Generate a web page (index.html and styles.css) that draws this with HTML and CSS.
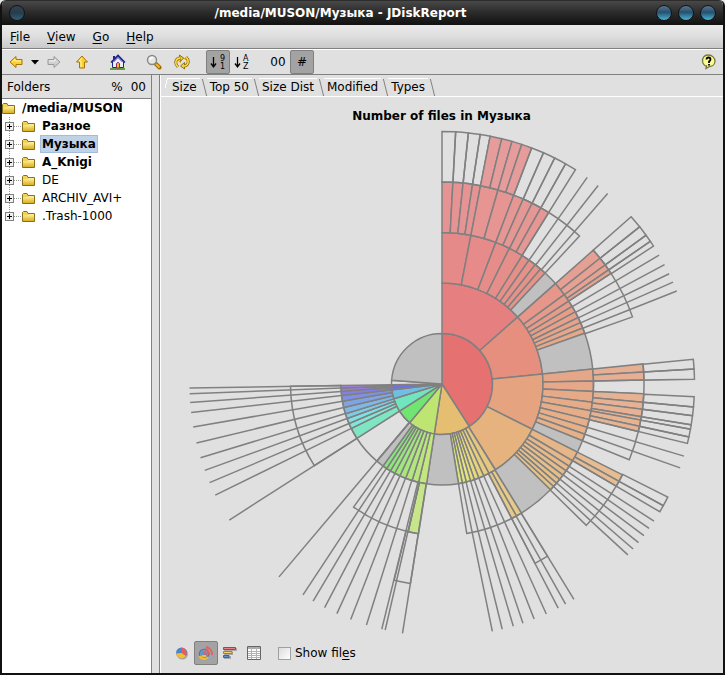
FILE: index.html
```html
<!DOCTYPE html>
<html lang="ru">
<head>
    <meta charset="utf-8">
    <title>/media/MUSON/Музыка - JDiskReport</title>
    <meta name="viewport" content="width=device-width, initial-scale=1">
    <link rel="stylesheet" href="styles.css">
</head>
<body>
    <div class="window">
        <header class="titlebar">
            <button class="orb dim" aria-label="Window menu"></button>
            <h1>/media/MUSON/Музыка - JDiskReport</h1>
            <div class="orbs">
                <button class="orb" aria-label="Minimize"></button>
                <button class="orb" aria-label="Maximize"></button>
                <button class="orb" aria-label="Close"></button>
            </div>
        </header>

        <nav class="menubar">
            <button><u>F</u>ile</button>
            <button><u>V</u>iew</button>
            <button><u>G</u>o</button>
            <button><u>H</u>elp</button>
        </nav>

        <div class="toolbar">
            <div class="group">
                <button class="tool" aria-label="Back">
                    <svg width="14" height="14" viewBox="0 0 14 14"><path d="M1 7 7 1.500V4.500H13V9.500H7V12.500Z" fill="#f7d038" stroke="#a87500"/><path d="M3 7 6 4V6H12" fill="none" stroke="#fff7b0"/></svg>
                </button>
                <button class="tool narrow" aria-label="History">
                    <svg width="8" height="5" viewBox="0 0 8 5"><path d="M0 0H8L4 4.500Z" fill="#000"/></svg>
                </button>
                <button class="tool" aria-label="Forward">
                    <svg width="14" height="14" viewBox="0 0 14 14"><path d="M13 7 7 1.500V4.500H1V9.500H7V12.500Z" fill="#d0d0d0" stroke="#999"/><path d="M2 6H8V4" fill="none" stroke="#f4f4f4"/></svg>
                </button>
            </div>
            <div class="group wide">
                <button class="tool" aria-label="Up">
                    <svg width="14" height="14" viewBox="0 0 14 14"><path d="M7 1 12.500 7H9.500V13H4.500V7H1.500Z" fill="#f7d038" stroke="#a87500"/><path d="M7 3 4 6H6V12" fill="none" stroke="#fff7b0"/></svg>
                </button>
            </div>
            <div class="group wide">
                <button class="tool" aria-label="Home">
                    <svg width="16" height="16" viewBox="0 0 16 16"><path d="M0 15H15" stroke="#62a03a" stroke-width="2"/><path d="M2.500 8 8 2.500 13.500 8V13.500H2.500Z" fill="#e9edf8" stroke="#23238e"/><path d="M3 2H5V5H3Z" fill="#23238e"/><path d="M1 8.500 8 1.500 15 8.500" fill="none" stroke="#23238e" stroke-width="1.600"/><path d="M4 8 8 4 12 8" fill="none" stroke="#8a9be0"/><path d="M6.500 14V9.500Q8 7 9.500 9.500V14Z" fill="#e8c030" stroke="#a02060"/></svg>
                </button>
            </div>
            <div class="group">
                <button class="tool" aria-label="Find">
                    <svg width="16" height="16" viewBox="0 0 16 16"><path d="M10 10 13.500 13.500" stroke="#a06a00" stroke-width="4" stroke-linecap="round"/><path d="M10.500 10.500 13 13" stroke="#f2b632" stroke-width="2" stroke-linecap="round"/><circle cx="6" cy="6" r="4.500" fill="#e4e7e4" stroke="#888" stroke-width="1.400"/><path d="M4 6Q4 3.500 7 3.500" fill="none" stroke="#fff" stroke-width="1.500"/></svg>
                </button>
            </div>
            <div class="group wide">
                <button class="tool" aria-label="Refresh">
                    <svg width="16" height="16" viewBox="0 0 16 16"><g fill="none" stroke="#94700a" stroke-width="3"><path d="M4 13Q1 10 2 7T6 4"/><path d="M12 3Q15 6 14 9T10 12"/></g><path d="M5.500 1 9.500 4 6.500 7.500ZM10.500 8.500 6.500 12 10.500 15Z" fill="#f5d23d" stroke="#94700a"/><path d="M3 5 7 9M9 3 13 7" stroke="#c9a32b"/><g fill="none" stroke="#f9dc55" stroke-width="1.400"><path d="M4 13Q1 10 2 7T6 4"/><path d="M12 3Q15 6 14 9T10 12"/></g></svg>
                </button>
            </div>
            <div class="group wide">
                <button class="tool pressed" aria-label="Sort by size">
                    <svg width="16" height="18" viewBox="0 0 16 18"><path d="M3.500 4V13M1 10.500 3.500 14 6 10.500" fill="none" stroke="#000" stroke-width="1.300"/><text x="10" y="8">9</text><text x="10" y="16">1</text></svg>
                </button>
                <button class="tool" aria-label="Sort by name">
                    <svg width="16" height="18" viewBox="0 0 16 18"><path d="M3.500 4V13M1 10.500 3.500 14 6 10.500" fill="none" stroke="#000" stroke-width="1.300"/><text x="9" y="8">A</text><text x="9" y="16">Z</text></svg>
                </button>
            </div>
            <div class="group wide">
                <button class="tool" aria-label="Show size">00</button>
                <button class="tool pressed" aria-label="Show count">#</button>
            </div>
            <button class="tool help" aria-label="Help">
                <svg width="16" height="16" viewBox="0 0 16 16"><path d="M7 1C3 1 1.500 4 1.500 7S4 12 5.500 12L5 14.500 8.500 12.500C12 12.500 14 10 14 7S11 1 7.500 1Z" fill="#fbfb92" stroke="#77773c" stroke-width="1.300"/><path d="M5.500 5.500Q5.500 3.500 7.500 3.500T9.500 5.500Q9.500 6.500 8 7.500V9M8 10V11.500" fill="none" stroke="#000" stroke-width="1.800"/></svg>
            </button>
        </div>

        <main class="main">
            <aside class="folders">
                <div class="folders-head">
                    <span class="folders-title">Folders</span>
                    <button>%</button>
                    <button>00</button>
                </div>
                <ul class="tree">
                    <li class="root"><svg class="folder"><use href="#folder"/></svg><b>/media/MUSON</b></li>
                    <li><i class="plus"></i><svg class="folder"><use href="#folder"/></svg><b>Разное</b></li>
                    <li><i class="plus"></i><svg class="folder"><use href="#folder"/></svg><b class="selected">Музыка</b></li>
                    <li><i class="plus"></i><svg class="folder"><use href="#folder"/></svg><b>A_Knigi</b></li>
                    <li><i class="plus"></i><svg class="folder"><use href="#folder"/></svg><span>DE</span></li>
                    <li><i class="plus"></i><svg class="folder"><use href="#folder"/></svg><span>ARCHIV_AVI+</span></li>
                    <li><i class="plus"></i><svg class="folder"><use href="#folder"/></svg><span>.Trash-1000</span></li>
                </ul>
            </aside>

            <section class="report">
                <div class="tabs">
                    <button class="tab active">Size</button>
                    <button class="tab">Top 50</button>
                    <button class="tab">Size Dist</button>
                    <button class="tab">Modified</button>
                    <button class="tab">Types</button>
                </div>
                <div class="chart">
                    <h2>Number of files in Музыка</h2>
                    <svg id="rings" viewBox="-254 -254 508 508"></svg>
                </div>
                <div class="bottombar">
                    <button class="tool" aria-label="Pie chart">
                        <svg width="14" height="14" viewBox="0 0 14 14"><circle cx="7.500" cy="8" r="5.500" fill="#aaa"/><circle cx="6.500" cy="7" r="5.500" fill="#4b86cc"/><path d="M6.500 7V1.500A5.500 5.500 0 0 1 11 10Z" fill="#e4605c"/><path d="M6.500 7 11 10A5.500 5.500 0 0 1 1 7.500Z" fill="#f3bd3a"/></svg>
                    </button>
                    <button class="tool pressed" aria-label="Ring chart">
                        <svg width="16" height="14" viewBox="0 0 16 14"><circle cx="6" cy="8" r="4.500" fill="none" stroke="#3f7cc6" stroke-width="1.600"/><circle cx="6" cy="8" r="3" fill="#5a93d4"/><path d="M6 8V5A3 3 0 0 1 8 10Z" fill="#e4605c"/><path d="M1.500 10A5 5 0 0 0 10 11M4 10H8" fill="none" stroke="#f3bd3a" stroke-width="2"/><path d="M7 3A5 5 0 0 1 11 9M8 .800A7.500 7.500 0 0 1 14 9" fill="none" stroke="#e0625e" stroke-width="1.800"/></svg>
                    </button>
                    <button class="tool" aria-label="Bar chart">
                        <svg width="14" height="14" viewBox="0 0 14 14"><path d="M1 2H14V5H1ZM1 6H10V9H1ZM1 10H8V13H1Z" fill="#aaa"/><path d="M.5 1.500H12.500V3.500H.5Z" fill="#e88080" stroke="#b04040"/><path d="M.5 5.500H9V7.500H.5Z" fill="#f6d070" stroke="#b08010"/><path d="M.5 9.500H6V11.500H.5Z" fill="#6090c8" stroke="#3a689c"/></svg>
                    </button>
                    <button class="tool" aria-label="Table">
                        <svg width="14" height="14" viewBox="0 0 14 14"><path d="M.5.500H13.500V13.500H.5Z" fill="#fff" stroke="#666"/><path d="M1 2H13" stroke="#aaa" stroke-width="2"/><path d="M1 5.500H13M1 7.500H13M1 9.500H13M1 11.500H13M4.500 1V13M9.500 1V13" stroke="#b4b4b4"/></svg>
                    </button>
                    <label class="check"><input type="checkbox"><span>Show fil<u>e</u>s</span></label>
                </div>
            </section>
        </main>
    </div>

    <svg width="0" height="0" class="defs">
        <defs>
            <linearGradient id="gold" x2="0" y2="1"><stop stop-color="#fff6a0"/><stop offset="1" stop-color="#dcae24"/></linearGradient>
            <symbol id="folder" viewBox="0 0 13 11">
                <path d="M.5 10.500V1.500L1.500.500H5L6 2.500H12.500V10.500Z" fill="#f1d35a" stroke="#87701a"/>
                <path d="M1 4.500 6 4 7 3H12V10H1Z" fill="url(#gold)"/>
            </symbol>
        </defs>
    </svg>
    <script src="rings.js"></script>
</body>
</html>
```

FILE: styles.css
```css
* {
    box-sizing: border-box;
}
body {
    margin: 0;
    background: #e8e8e8;
    color: #000;
    font-family: "DejaVu Sans", sans-serif;
    font-size: 12px;
    line-height: 18px;
}
button {
    margin: 0;
    padding: 0;
    border: 0;
    background: none;
    color: inherit;
    font: inherit;
}
u {
    text-underline-offset: 2px;
}
.window {
    display: flex;
    flex-direction: column;
    min-height: 100vh;
    border: 2px solid #111;
    border-top: 0;
    border-radius: 6px 6px 0 0;
    background: #e0e0e0;
    overflow: hidden;
}

/* title bar */
.titlebar {
    display: flex;
    align-items: center;
    justify-content: space-between;
    height: 25px;
    padding: 0 7px;
    background: linear-gradient(#111 0, #484848 1px, #2b2b2b 50%, #111 100%);
    color: #fff;
}
.titlebar h1 {
    flex: 1;
    margin: 0;
    font-size: 12px;
    text-align: center;
}
.orbs {
    display: flex;
    gap: 6px;
}
.orb {
    width: 16px;
    height: 16px;
    border: 1px solid #151515;
    border-radius: 50%;
    background: linear-gradient(#5c7390, #24526f 45%, #4eb0d4);
}
.orb.dim {
    background: linear-gradient(#35424e, #253d4d 50%, #32607a);
}

/* menu and toolbar */
.menubar {
    display: flex;
    gap: 17px;
    height: 24px;
    padding: 0 8px;
    border-bottom: 1px solid #808080;
    background: linear-gradient(#ebebeb, #dedede 50%, #c9c9c9);
}
.toolbar {
    display: flex;
    align-items: center;
    height: 26px;
    padding: 0 2px;
    border-top: 1px solid #fff;
    border-bottom: 1px solid #808080;
}
.group {
    display: flex;
    margin-right: 4px;
}
.group.wide {
    margin-right: 12px;
}
.tool {
    display: flex;
    align-items: center;
    justify-content: center;
    width: 24px;
    height: 24px;
}
.tool.narrow {
    width: 14px;
}
.tool.pressed {
    border: 1px solid #808080;
    border-radius: 2px;
    background: #a3a3a3;
}
.tool text {
    font-family: "DejaVu Sans", sans-serif;
    font-size: 8px;
}
.tool.help {
    margin-left: auto;
}

/* folder tree */
.main {
    display: flex;
    flex: 1;
    gap: 7px;
}
.folders {
    display: flex;
    flex-direction: column;
    width: 150px;
    border-right: 1px solid #808080;
    background: #fff;
}
.folders-head {
    display: flex;
    gap: 8px;
    height: 24px;
    padding: 0 5px;
    line-height: 24px;
    border-bottom: 1px solid #808080;
    background: #e0e0e0;
}
.folders-title {
    flex: 1;
}
.tree {
    margin: 0;
    padding: 0;
    list-style: none;
}
.tree li {
    display: flex;
    align-items: center;
    height: 18px;
    padding-left: 3px;
    background: repeating-linear-gradient(#999 0 1px, #fff 1px 2px) 7px 0 / 1px 100% no-repeat,
        repeating-linear-gradient(90deg, #999 0 1px, #fff 1px 2px) 12px 9px / 8px 1px no-repeat;
}
.tree li.root {
    padding-left: 0;
    background: none;
}
.tree li:last-child {
    background-size: 1px 9px, 8px 1px;
}
.folder {
    width: 13px;
    height: 11px;
    margin-right: 5px;
}
.plus {
    width: 9px;
    height: 9px;
    margin-right: 8px;
    border: 1px solid #808080;
    background: linear-gradient(#000, #000) 1px 3px / 5px 1px no-repeat,
        linear-gradient(#000, #000) 3px 1px / 1px 5px no-repeat,
        #f0f0f0;
}
.tree b,
.tree span {
    height: 18px;
    padding: 0 2px;
    line-height: 18px;
}
.tree .selected {
    background: #c0d2e6;
    box-shadow: inset 0 0 0 1px #a4bcdc;
}

/* report */
.report {
    display: flex;
    flex: 1;
    flex-direction: column;
    min-width: 0;
    border-left: 1px solid #808080;
    box-shadow: inset 1px 0 #fff;
}
.tabs {
    display: flex;
    height: 22px;
    padding: 3px 0 0 5px;
    border-bottom: 1px solid #fff;
}
.tab {
    position: relative;
    height: 18px;
    padding: 0 8px 0 5px;
}
.tab::after {
    content: "";
    position: absolute;
    top: 1px;
    right: 0;
    width: 3px;
    height: 17px;
    border-right: 1px solid #808080;
    transform: skewX(14deg);
}
.tab::before {
    content: "";
    position: absolute;
    top: 0;
    left: 2px;
    right: 5px;
    height: 1px;
    background: #fff;
}
.tab.active {
    padding-left: 7px;
    background: linear-gradient(105deg, transparent 2px, #fff 2px 3px, transparent 3px);
}
.chart {
    display: flex;
    flex: 1;
    flex-direction: column;
    align-items: center;
}
.chart h2 {
    margin: 10px 0 5px;
    font-size: 12px;
    line-height: 18px;
}
.chart svg {
    width: 100%;
    max-width: 508px;
}
.sector {
    stroke: #808080;
    stroke-width: 1.5;
}
.bottombar {
    display: flex;
    align-items: center;
    padding: 3px 10px 8px;
}
.check {
    display: flex;
    align-items: center;
    gap: 4px;
    margin-left: 12px;
}
.check input {
    appearance: none;
    width: 13px;
    height: 13px;
    margin: 0;
    border: 1px solid #a0a0a0;
    background: linear-gradient(135deg, #dcdcdc, #fff);
}
.defs {
    position: absolute;
}
```

FILE: rings.js
```js
// angles are in degrees, clockwise from the top
const RADII = [0, 50.5, 101, 151.5, 202, 252.5];
const SATURATION = [0, 69, 67, 65, 63, 61];
const LIGHT = [0, 67, 70, 72, 74, 76];

// ring, edges, fill: [first hue, last hue], 'other' or 'none'
const bands = [
    [1, [0, 147.3], [0, 0]],
    [1, [147.3, 188.8], [40, 40]],
    [1, [188.8, 219.9], [80, 80]],
    [1, [219.9, 237.5], [120, 120]],
    [1, [237.5, 253], [160, 160]],
    [1, [253, 263.4], [200, 200]],
    [1, [263.4, 269.2], [240, 240]],
    [1, [269.2, 274.2], 'none'],
    [1, [274.2, 360], 'other'],

    [2, [0, 48.5], [0, 0]],
    [2, [48.5, 84.3], [9, 9]],
    [2, [84.3, 116.6], [21, 21]],
    [2, [116.6, 148], [30, 30]],
    [2, [148.2, 152.3, 155.6, 158.6, 161.3, 163.6, 166.1, 168.4, 170.6], [42, 67]],
    [2, [170.6, 188.8], 'other'],
    [2, [188.8, 193.4, 197.2, 201.1, 204.6, 207.9, 210.7, 213.2, 215.7], [80, 115]],
    [2, [215.7, 220.2], 'other'],
    [2, [220.2, 237.5], 'none'],
    [2, [237.5, 243.9, 247, 250, 252.9, 256.5, 260.2, 263.4, 265.9, 267.7, 269.2], [160, 265]],

    [3, [0, 11, 20.8, 26.4, 32, 35.1, 38, 40.6, 42.9], [0, 7]],
    [3, [42.9, 48.5], 'other'],
    [3, [48.5, 53.8, 56.8, 59.2, 61.6, 64, 66.1, 68.3, 70.4], [9, 20]],
    [3, [70.4, 84.3], 'other'],
    [3, [84.3, 88.9, 92.8, 96.9, 100.2, 103.6, 106.6, 109.4, 112], [19, 26]],
    [3, [112, 116.7], 'other'],
    [3, [116.7, 120.5, 122.9, 125, 127, 129, 130.9, 132.6, 134.3], [29, 38]],
    [3, [134.3, 148.4], 'other'],
    [3, [148.4, 150.6, 152.6], [42, 42]],
    [3, [152.6, 170.6], 'none'],
    [3, [188.9, 192.9], [80, 80]],
    [3, [192.9, 215.7], 'none'],
    [3, [237.4, 269.2], 'none'],

    [4, [0, 3.1, 6, 8.7, 11, 16.1, 20.8, 23.7, 26.5, 29.3, 31.9], [0, 3]],
    [4, [31.9, 42.9], 'none'],
    [4, [48.5, 51.5, 53.9, 55.6, 56.8], [9, 12]],
    [4, [56.8, 70.6], 'none'],
    [4, [84.3, 86.6, 88.9], [20, 20]],
    [4, [88.9, 92.8], 'none'],
    [4, [92.8, 95.2, 97.2, 99.3, 100.3, 102.1, 103.6], [22, 23]],
    [4, [103.6, 112], 'none'],
    [4, [116.7, 118.8, 120.4], [30, 30]],
    [4, [120.4, 134.4], 'none'],
    [4, [148.5, 152.6], 'none'],
    [4, [189, 193.7], 'none'],

    [5, [0, 3.1, 6, 8.7, 11], 'none'],
    [5, [11, 13.7, 16.1, 18.4, 20.8], [0, 0]],
    [5, [20.8, 23.7, 26.5, 29.3, 31.9], 'none'],
    [5, [48.5, 51.5, 53.9, 55.6, 56.9], 'none'],
    [5, [84.4, 86.6, 88.9], 'none'],
    [5, [92.9, 95.2, 97.2, 99.3, 100.3, 102.1, 103.6], 'none'],
    [5, [116.6, 118.8, 120.4], 'none']
];

// folders too thin to fill: inner ring edge, then angles
const spokes = [
    [3, [35.1, 38.2, 41]],
    [3, [59.3, 61.8, 64.1, 66.2, 68.4]],
    [3, [106.6, 109.4]],
    [3, [122.9, 124.9, 126.9, 128.9, 130.8, 132.6]],
    [3, [148.5, 150.7, 152.6]],
    [2, [155.6, 158.6, 161.3, 163.6, 166.2, 168.5]],
    [2, [189, 193, 193.8, 197.4, 201.2, 204.6, 207.7, 210.7, 213.4]],
    [1, [220.2]],
    [2, [237.4, 243.9, 247, 250, 253, 256.5, 260.2, 263.5, 265.8, 267.8, 269.1]]
];

const svg = document.getElementById('rings');

function point(radius, angle) {
    const a = angle * Math.PI / 180;
    return (radius * Math.sin(a)).toFixed(2) + ' ' + (-radius * Math.cos(a)).toFixed(2);
}

function addPath(d, fill) {
    const path = document.createElementNS('http://www.w3.org/2000/svg', 'path');
    path.setAttribute('d', d);
    path.setAttribute('fill', fill);
    path.setAttribute('class', 'sector');
    svg.appendChild(path);
}

bands.forEach(([ring, edges, color]) => {
    const inner = RADII[ring - 1];
    const outer = RADII[ring];
    for (let i = 0; i < edges.length - 1; i++) {
        const from = edges[i];
        const to = edges[i + 1];
        let fill = color;
        if (color === 'other') {
            fill = '#c0c0c0';
        } else if (color !== 'none') {
            const hue = color[0] + (color[1] - color[0]) * i / Math.max(1, edges.length - 2);
            fill = `hsl(${hue}, ${SATURATION[ring]}%, ${LIGHT[ring]}%)`;
        }
        const large = to - from > 180 ? 1 : 0;
        addPath(
            `M${point(inner, from)}L${point(outer, from)}` +
            `A${outer} ${outer} 0 ${large} 1 ${point(outer, to)}` +
            `L${point(inner, to)}A${inner} ${inner} 0 ${large} 0 ${point(inner, from)}Z`,
            fill
        );
    }
});

spokes.forEach(([start, angles]) => {
    angles.forEach(angle => {
        addPath(`M${point(RADII[start], angle)}L${point(RADII[5], angle)}`, 'none');
    });
});
```
